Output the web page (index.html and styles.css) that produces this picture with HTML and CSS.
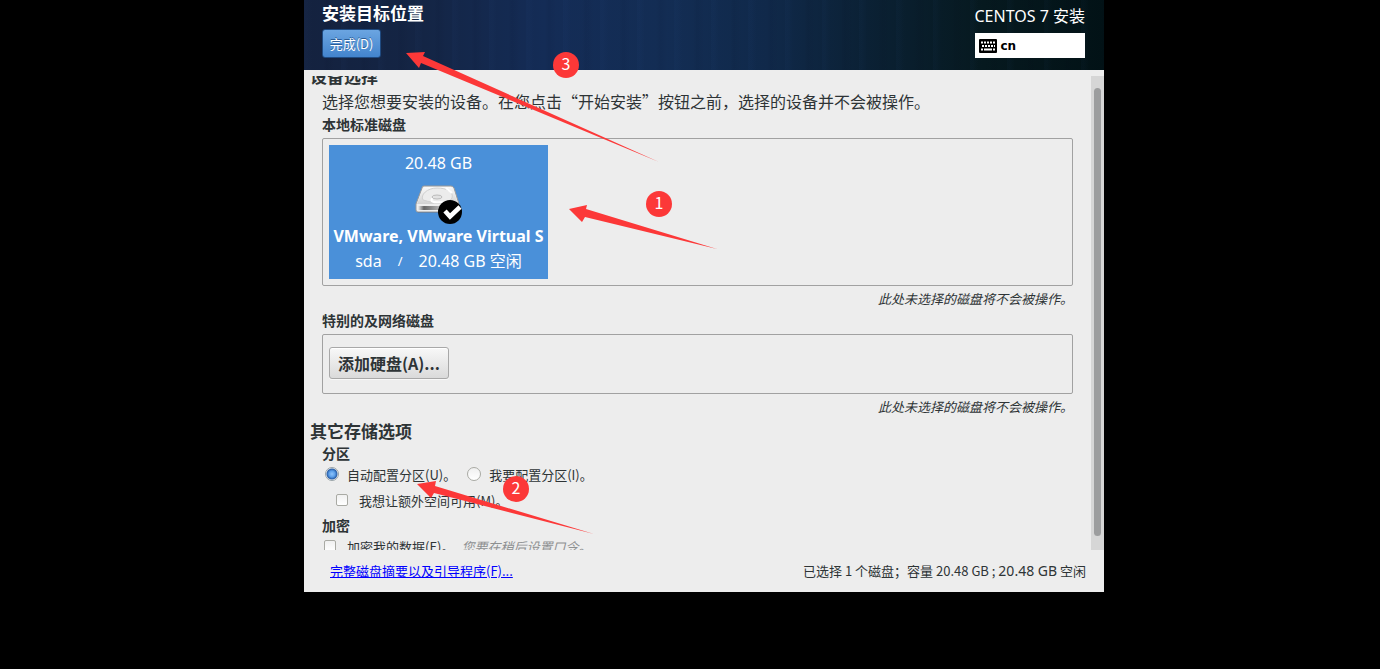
FILE: index.html
```html
<!doctype html>
<html lang="zh-CN">
    <head>
        <meta charset="UTF-8" />
        <meta name="viewport" content="width=device-width, initial-scale=1.0" />
        <title>CENTOS 7 安装</title>
        <link rel="stylesheet" href="styles.css">
    </head>
    <body>
        <main class="installer">
            <header class="header">
                <div class="header-left">
                    <h1>安装目标位置</h1>
                    <button type="button" class="done-button">完成(D)</button>
                </div>
                <div class="header-right">
                    <div class="product">CENTOS 7 安装</div>
                    <button type="button" class="keyboard">
                        <svg width="18" height="14" viewBox="0 0 18 14" aria-hidden="true">
                            <rect width="18" height="14" rx="1" fill="#000" />
                            <path d="M2 3.5h14M3 7h13" stroke="#fff" stroke-width="2" stroke-dasharray="2 1" />
                            <path d="M2 10.5h2M5 10.5h8M14 10.5h2" stroke="#fff" stroke-width="2" />
                        </svg>
                        <span>cn</span>
                    </button>
                </div>
            </header>

            <div class="scroll-area">
                <div class="content">
                    <h2>设备选择</h2>
                    <div class="section">
                        <p class="intro">选择您想要安装的设备。在您点击“开始安装”按钮之前，选择的设备并不会被操作。</p>
                        <h3>本地标准磁盘</h3>
                        <div class="frame">
                            <button type="button" class="disk" aria-pressed="true">
                                <span class="disk-size">20.48 GB</span>
                                <svg class="disk-icon" width="48" height="48" viewBox="0 0 48 48" aria-hidden="true">
                                    <defs>
                                        <linearGradient id="top" x1="0" y1="0" x2="0" y2="1">
                                            <stop offset="0" stop-color="#fafafa" />
                                            <stop offset="1" stop-color="#d2d2d2" />
                                        </linearGradient>
                                        <linearGradient id="front" x1="0" y1="0" x2="1" y2="0">
                                            <stop offset="0" stop-color="#eee" />
                                            <stop offset="0.15" stop-color="#666" />
                                            <stop offset="0.6" stop-color="#bbb" />
                                            <stop offset="1" stop-color="#eee" />
                                        </linearGradient>
                                    </defs>
                                    <path d="M2 35h42v2H3z" fill="#376fae" />
                                    <path d="M9 10h27q2 0 3 2l5 16v6q0 2-2 2H3q-2 0-2-2v-6L7 12q0-2 2-2z" fill="#eee" stroke="#999" />
                                    <path d="M9.500 11h26q1.500 0 2 1.500L43 28H2L8 12.500Q8.500 11 9.500 11z" fill="url(#top)" />
                                    <path d="M3 30h39v4H3z" fill="url(#front)" />
                                    <path d="M8 24c-3-5 4-12 14-12s17 4 15 10c-2 5-17 6-29 2z" fill="#ececec" stroke="#d0d0d0" />
                                    <path d="M18 22c-4 3 0 5 8 4 5 0 7 1 9 2M31 12l6 5" fill="none" stroke="#fff" stroke-width="2" />
                                    <ellipse cx="22" cy="21" rx="5" ry="2" fill="#e2e2e2" stroke="#bbb" />
                                    <circle cx="35" cy="36" r="12" fill="#000" />
                                    <path d="M30 35l5 5.500L45 31" fill="none" stroke="#fff" stroke-width="4.500" />
                                </svg>
                                <strong class="disk-name">VMware, VMware Virtual S</strong>
                                <span class="disk-info">
                                    <span>sda</span>
                                    <span class="slash">/</span>
                                    <span>20.48 GB 空闲</span>
                                </span>
                            </button>
                        </div>
                        <p class="note">此处未选择的磁盘将不会被操作。</p>
                        <h3>特别的及网络磁盘</h3>
                        <div class="frame frame-network">
                            <button type="button" class="add-button">添加硬盘(A)...</button>
                        </div>
                        <p class="note">此处未选择的磁盘将不会被操作。</p>
                    </div>

                    <h2>其它存储选项</h2>
                    <div class="section">
                        <h3>分区</h3>
                        <div class="option-row">
                            <input type="radio" name="partition" id="auto" checked />
                            <label for="auto">自动配置分区(U)。</label>
                            <input type="radio" name="partition" id="manual" />
                            <label for="manual">我要配置分区(I)。</label>
                        </div>
                        <div class="option-row option-extra">
                            <input type="checkbox" id="extra" />
                            <label for="extra">我想让额外空间可用(M)。</label>
                        </div>
                        <h3>加密</h3>
                        <div class="option-row option-encrypt">
                            <input type="checkbox" id="encrypt" />
                            <label for="encrypt">加密我的数据(E)。</label>
                            <em>您要在稍后设置口令。</em>
                        </div>
                    </div>
                </div>
                <div class="scrollbar"><div class="thumb"></div></div>
            </div>

            <footer class="footer">
                <a href="#">完整磁盘摘要以及引导程序(F)...</a>
                <div class="summary">已选择 1 个磁盘；容量 20.48 GB ; <span>20.48 GB</span> 空闲</div>
            </footer>

            <!-- step markers drawn over the window -->
            <div class="steps">
                <svg width="800" height="592" viewBox="0 0 800 592" fill="#fc3838" aria-hidden="true">
                    <path d="M265 209l18-4-1 4 131 40-132-32-3 5z" />
                    <path d="M113 484l19-3-1 5 159 48-160-41-3 5z" />
                    <path d="M102 53l19-1-2 4 236 106-238-99-2 5z" />
                </svg>
                <span class="badge badge-1">1</span>
                <span class="badge badge-2">2</span>
                <span class="badge badge-3">3</span>
            </div>
        </main>
    </body>
</html>
```

FILE: styles.css
```css
* {
    box-sizing: border-box;
}
body {
    margin: 0;
    background: #000;
    color: #2e3436;
    font-family: "Noto Sans CJK SC", sans-serif;
    font-size: 13px;
    display: grid;
    grid-template-columns: 76fr 200fr 69fr;
}
h1,
h2,
h3,
p {
    margin: 0;
}
button {
    font-family: inherit;
    cursor: pointer;
}
.installer {
    grid-column: 2;
    position: relative;
    min-width: 0;
    background: #ededed;
}
.header {
    display: flex;
    justify-content: space-between;
    height: 70px;
    padding: 0 19px 0 18px;
    color: #fff;
    background:
        repeating-linear-gradient(90deg, rgba(60, 110, 190, 0.03) 0 3px, transparent 8px 19px, rgba(0, 0, 20, 0.05) 23px, transparent 31px 37px),
        linear-gradient(90deg, #14223f 0%, #142545 15%, #142c56 30%, #132d54 45%, #10294a 58%, #0b2135 70%, #06191f 85%, #021216 100%);
}
h1 {
    font-size: 17px;
    line-height: 25px;
}
.done-button {
    display: block;
    margin-top: 4px;
    width: 59px;
    height: 29px;
    padding: 0;
    border: 1px solid #1f4a80;
    border-radius: 3px;
    background: linear-gradient(#6ba5e1, #4384cd);
    color: #fff;
    font-size: 13px;
    text-shadow: 0 -1px #2b5c96;
}
.product {
    font-family: "Noto Sans", "Noto Sans CJK SC", sans-serif;
    font-size: 16px;
    line-height: 33px;
}
.keyboard {
    display: flex;
    align-items: center;
    gap: 4px;
    width: 110px;
    height: 25px;
    padding: 0 4px;
    border: 0;
    background: #fff;
    color: #000;
    font: bold 12px "DejaVu Sans", sans-serif;
}
.scroll-area {
    display: flex;
    justify-content: space-between;
    height: calc(100vh - 195px);
    margin-top: 6px;
    overflow: hidden;
}
.content {
    flex: 1;
    margin-top: -13px;
    padding: 0 18px 0 6px;
}
h2 {
    font-size: 17px;
    line-height: 25px;
}
.section {
    padding-left: 12px;
}
.intro {
    font-size: 16px;
    line-height: 26px;
    white-space: nowrap;
}
h3 {
    font-size: 14px;
    line-height: 20px;
}
.frame {
    margin-top: 4px;
    padding: 6px;
    border: 1px solid #a1a1a1;
    border-radius: 2px;
}
.frame-network {
    padding: 12px 6px 14px;
}
.disk {
    display: flex;
    flex-direction: column;
    align-items: center;
    width: 219px;
    padding: 6px 0 5px;
    border: 0;
    background: #4a90d9;
    color: #fff;
    font-family: "Noto Sans", "Noto Sans CJK SC", sans-serif;
    font-size: 16px;
    line-height: 25px;
    white-space: nowrap;
}
.disk-info {
    display: flex;
    gap: 16px;
}
.slash {
    font-size: 13px;
}
.note {
    padding-top: 2px;
    font-style: italic;
    line-height: 22px;
    text-align: right;
}
.add-button {
    display: block;
    width: 120px;
    height: 32px;
    padding: 0;
    border: 1px solid #a8a8a8;
    border-radius: 3px;
    background: linear-gradient(#f8f8f8, #dadada);
    box-shadow: inset 0 1px #fff, 0 1px #f8f8f8;
    color: #2e3436;
    font-size: 16px;
    font-weight: bold;
}
.option-row {
    display: flex;
    align-items: center;
    height: 22px;
    padding-left: 3px;
    white-space: nowrap;
}
.option-row label {
    margin: 0 11px 0 8px;
}
.option-extra {
    height: 30px;
    padding-left: 14px;
}
.option-extra label {
    margin-left: 11px;
}
.option-encrypt {
    padding-left: 2px;
}
.option-encrypt label {
    margin: 0 7px 0 11px;
}
.option-encrypt em {
    color: #8d9091;
}
input {
    appearance: none;
    flex: none;
    margin: 0;
    border: 1px solid #a9aaa4;
    background: linear-gradient(#f0f0f0, #fff);
}
input[type="radio"] {
    width: 14px;
    height: 14px;
    border-radius: 50%;
}
input[type="radio"]:checked {
    border-color: #9aa4a8;
    background: radial-gradient(circle, #8fc4fb 0, #5b9fea 3px, #2a5fa8 5px, #f4f4f4 6px) border-box;
}
input[type="checkbox"] {
    width: 12px;
    height: 12px;
    border-radius: 2px;
}
.scrollbar {
    width: 13px;
    padding: 12px 3px 14px;
    background: #d6d6d6;
}
.thumb {
    height: 100%;
    border-radius: 4px;
    background: #9c9d9e;
}
.footer {
    display: flex;
    justify-content: space-between;
    align-items: center;
    height: 42px;
    padding: 0 18px 2px 26px;
}
.footer a {
    color: #00f;
}
.summary span {
    font-family: "Noto Sans", sans-serif;
    font-size: 14px;
}
.steps {
    position: absolute;
    top: 0;
    left: 0;
    pointer-events: none;
}
.steps svg {
    display: block;
}
.badge {
    position: absolute;
    width: 26px;
    height: 26px;
    border-radius: 50%;
    background: #fc3838;
    color: #fff;
    font-size: 16px;
    line-height: 22px;
    text-align: center;
}
.badge-1 {
    top: 191px;
    left: 342px;
}
.badge-2 {
    top: 476px;
    left: 199px;
}
.badge-3 {
    top: 52px;
    left: 249px;
}
```
